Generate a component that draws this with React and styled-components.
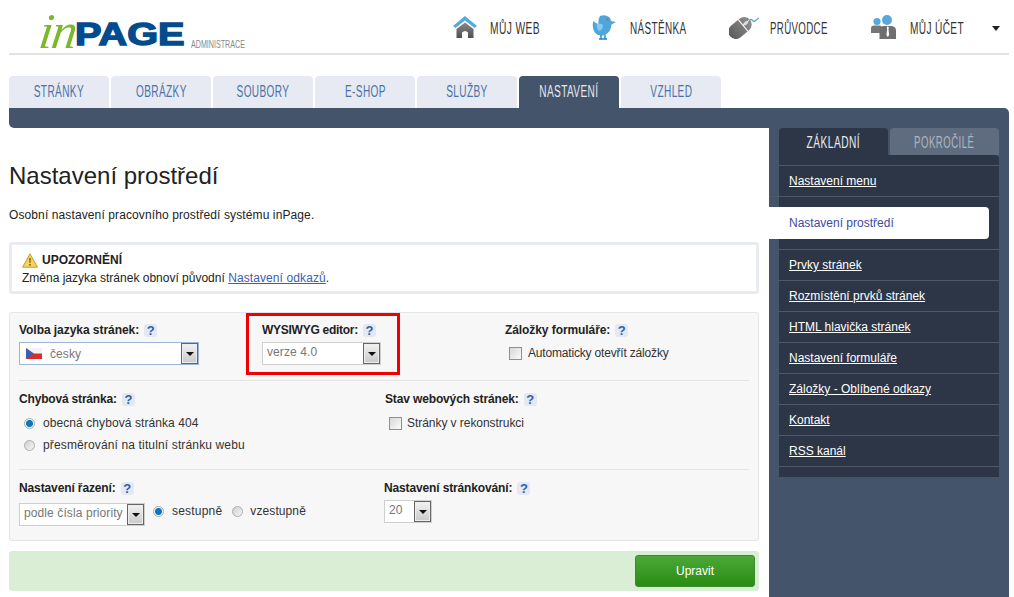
import styled, { createGlobalStyle } from 'styled-components'

const Global = createGlobalStyle`
  html, body { margin: 0; padding: 0; background: #fff; }
  body {
    font-family: "Liberation Sans", Arial, sans-serif;
    font-size: 12px;
    color: #222;
    overflow: hidden;
  }
  * { box-sizing: border-box; }
`

// no condensed family is installed, so the caps are squeezed horizontally
const Squeezed = styled.span`
  display: inline-block;
  white-space: nowrap;
  transform: scaleX(${p => p.$x || 0.63});
  transform-origin: ${p => p.$origin || 'center'};
`

function HomeIcon() {
  return (
    <svg width="24" height="22" viewBox="0 0 24 22">
      <defs>
        <linearGradient id="homeBody" x1="0" y1="0" x2="0" y2="1">
          <stop offset="0" stopColor="#8a8a8a" />
          <stop offset="1" stopColor="#4f4f4f" />
        </linearGradient>
      </defs>
      <path d="M12 0 L24 10 L21.5 12 L12 4.5 L2.5 12 L0 10 Z" fill="#56a9df" />
      <path
        fillRule="evenodd"
        d="M12 6.5 L20.5 13 V22 H15 V16.5 Q12 13.5 9 16.5 V22 H3.5 V13 Z"
        fill="url(#homeBody)"
      />
    </svg>
  )
}

function BirdIcon() {
  return (
    <svg width="25" height="25" viewBox="0 0 25 25">
      <path
        d="M8 1 Q13 -1 17 2 Q19 4 19 6 L24 7 L19.5 9.5 Q19 17 13 20 Q6 22 2.5 17 Q-0.5 11 1.5 6 Q4 9 6.5 9 Q6 4 8 1 Z"
        fill="#4ea6dc"
      />
      <path d="M5 9 Q9 8 11 10 Q11 15 7 16 Q4 13 5 9 Z" fill="#8cc8ee" />
      <circle cx="15.5" cy="4.5" r="1.4" fill="#7b8794" />
      <path d="M9 20 V24 M13 20 V24 M7 24 H15" stroke="#1f86c6" strokeWidth="1.4" fill="none" />
    </svg>
  )
}

function MouseIcon() {
  return (
    <svg width="30" height="24" viewBox="0 0 30 24" style={{ marginRight: -2 }}>
      <defs>
        <linearGradient id="mouseBody" x1="0" y1="0" x2="0" y2="1">
          <stop offset="0" stopColor="#8f8f8f" />
          <stop offset="1" stopColor="#5c5c5c" />
        </linearGradient>
      </defs>
      <g transform="rotate(50 11 13)">
        <rect x="3.5" y="0" width="15" height="26" rx="7.5" fill="url(#mouseBody)" />
        <path d="M3.5 9 H18.5 M11 0 V9" stroke="#fff" strokeWidth="1" />
        <rect x="9.5" y="3" width="3" height="5" rx="1.5" fill="#ddd" />
      </g>
      <path d="M20 7 Q21 3 23 5 T26 6 T30 3" stroke="#4ea6dc" strokeWidth="1.2" fill="none" />
    </svg>
  )
}

function UsersIcon() {
  return (
    <svg width="26" height="24" viewBox="0 0 26 24">
      <circle cx="6" cy="6.5" r="3.6" fill="#56a9df" />
      <path d="M0 18 V13.5 Q0 10.5 3 10.5 H9 Q11 10.5 11 13 V18 Z" fill="#777" />
      <circle cx="16" cy="5" r="5" fill="#56a9df" />
      <path d="M8.5 24 V15.5 Q8.5 11 13 11 H19.5 Q25 11 25 15.5 V24 Z" fill="#6f6f6f" />
      <path d="M16.8 11 L15.6 13 L16.2 14 L15.4 20 L16.8 22 L18.2 20 L17.4 14 L18 13 Z" fill="#fff" />
    </svg>
  )
}

function Flag() {
  return (
    <svg width="16" height="11" viewBox="0 0 16 11">
      <rect width="16" height="5.5" fill="#f3f3f3" />
      <rect y="5.5" width="16" height="5.5" fill="#dc2b2b" />
      <path d="M0 0 L8 5.5 L0 11 Z" fill="#3a5fae" />
    </svg>
  )
}

function WarningIcon() {
  return (
    <svg width="16" height="15" viewBox="0 0 16 15">
      <path d="M8 .8 L15.4 14.2 H.6 Z" fill="#f8d25c" stroke="#c99a2e" strokeLinejoin="round" />
      <path d="M7.2 5 H8.8 L8.5 10 H7.5 Z M7.2 11 H8.8 V12.6 H7.2 Z" fill="#7a5a14" />
    </svg>
  )
}

const Page = styled.div`
  width: 1014px;
  height: 597px;
  padding: 0 5px 0 9px;
  overflow: hidden;
`
const Header = styled.header`
  height: 55px;
  display: flex;
  border-bottom: 2px solid #e2e2e2;
`
const Logo = styled.div`
  width: 444px;
  padding: 13px 0 0 31px;
  display: flex;
  align-items: flex-start;
  flex-shrink: 0;
`
const LogoIn = styled.span`
  width: 35px;
  font-family: "Liberation Serif", serif;
  font-style: italic;
  font-size: 50px;
  line-height: 36px;
  letter-spacing: -1.5px;
  color: #7ab829;
  transform: skewX(-8deg);
`
const LogoPage = styled.span`
  width: 110px;
  margin-top: 10px;
  font-weight: 700;
  font-size: 31px;
  line-height: 23px;
  color: #034b8f;
  -webkit-text-stroke: 1.4px #034b8f;
  transform: scaleX(1.28);
  transform-origin: left center;
`
const LogoNote = styled.span`
  margin: 25px 0 0 6px;
  font-size: 10.5px;
  line-height: 12px;
  color: #888;
`
const Nav = styled.nav`
  display: flex;
  align-items: center;
  padding-top: 1px;
`
const NavItem = styled.a`
  width: ${p => p.$width}px;
  display: flex;
  align-items: center;
  gap: 13px;
  font-size: 16px;
  letter-spacing: 0.6px;
  color: #333;
  svg { flex-shrink: 0; }
  span { margin-top: 3px; }
`
const Caret = styled.span`
  width: 0;
  height: 0;
  margin: 2px 0 0 28px;
  border: 4px solid transparent;
  border-top: 5px solid #222;
  border-bottom: 0;
`
const Tabs = styled.div`
  display: flex;
  gap: 2px;
  margin-top: 21px;
`
const Tab = styled.a`
  width: 100px;
  height: 32px;
  padding-bottom: 1px;
  display: flex;
  align-items: center;
  justify-content: center;
  border-radius: 4px 4px 0 0;
  font-size: 16px;
  letter-spacing: 0.6px;
  background: ${p => (p.$active ? '#44546a' : '#e7eaf2')};
  color: ${p => (p.$active ? '#e6e9ef' : '#4a72aa')};
`
const Bar = styled.div`
  height: 20px;
  background: #44546a;
  border-radius: 0 5px 0 5px;
`
const Body = styled.div`
  display: flex;
  height: 470px;
`
const Main = styled.main`
  width: 760px;
  padding: 34px 10px 0 0;
  background: #fff;
  border-radius: 0 4px 0 0;
`
const Title = styled.h1`
  margin: 0;
  font-weight: 400;
  font-size: 24px;
  line-height: 28px;
  color: #222;
`
const Lead = styled.p`
  margin: 17px 0 19px;
  line-height: 16px;
  letter-spacing: 0.11px;
`
const Notice = styled.div`
  height: 52px;
  padding: 6px 0 0 10px;
  border: 3px solid #e8ebf2;
  border-radius: 3px;
  line-height: 18px;
`
const NoticeHead = styled.div`
  display: flex;
  align-items: center;
  gap: 4px;
  font-weight: 700;
`
const Link = styled.a`
  color: #3b5fb0;
  text-decoration: underline;
  letter-spacing: 0.1px;
`
const Panel = styled.section`
  margin-top: 18px;
  height: 229px;
  background: #f7f7f7;
  border: 1px solid #e5e5e5;
  border-radius: 3px;
`
const Row = styled.div`
  display: grid;
  grid-template-columns: ${p => p.$cols};
  margin: 0 9px;
  padding: ${p => p.$pad};
  border-bottom: ${p => (p.$last ? '0' : '1px solid #e4e4e4')};
`
const Field = styled.div`
  padding-top: ${p => p.$top || 0}px;
`
const MarkedField = styled.div`
  width: 154px;
  height: 62px;
  padding: 6px 0 0 13px;
  border: 3px solid #f00000;
`
const Label = styled.div`
  display: flex;
  align-items: center;
  gap: 5px;
  height: 16px;
  font-weight: 700;
  color: #222;
  letter-spacing: ${p => p.$spacing || 0}px;
`
const Help = styled.span`
  width: 13px;
  height: 13px;
  display: flex;
  align-items: center;
  justify-content: center;
  border-radius: 3px;
  background: #e3e9f3;
  color: #2f5fa8;
  font-size: 13px;
  font-weight: 700;
`
const SelectBox = styled.div`
  position: relative;
  width: ${p => p.$width}px;
  height: 23px;
  margin-top: ${p => p.$mt ?? 4}px;
  display: flex;
  align-items: center;
  gap: 8px;
  padding: ${p => p.$pad || '0 0 4px 4px'};
  background: #fff;
  border: 1px solid ${p => (p.$focus ? '#9db6d4' : '#cfcfcf')};
  color: #777;
  letter-spacing: 0.1px;
`
const SelectArrow = styled.span`
  position: absolute;
  top: 0;
  right: 0;
  width: 17px;
  height: 21px;
  display: flex;
  align-items: center;
  justify-content: center;
  border: 1px solid #666;
  box-shadow: inset 0 0 0 1px #ededed;
  background: linear-gradient(#f2f2f2, #c9c9c9);
  &::after {
    content: '';
    border: 4px solid transparent;
    border-top: 4px solid #111;
    border-bottom: 0;
  }
`
const Choice = styled.label`
  display: flex;
  align-items: center;
  height: ${p => p.$height || 22}px;
  margin-top: ${p => p.$mt || 0}px;
  gap: ${p => p.$gap || 8}px;
  padding-left: ${p => p.$indent || 5}px;
  color: #333;
  letter-spacing: ${p => p.$spacing || 0}px;
`
const Radio = styled.span`
  width: 11px;
  height: 11px;
  flex-shrink: 0;
  border-radius: 50%;
  border: 1px solid #adadad;
  background: ${p =>
    p.$on
      ? 'radial-gradient(circle, #0a78b8 0 3px, #eef2f5 4px)'
      : 'linear-gradient(135deg, #cfcfcf, #f6f6f6)'};
`
const Check = styled.span`
  width: 13px;
  height: 13px;
  flex-shrink: 0;
  border: 1px solid #8f8f8f;
  background: linear-gradient(135deg, #d8d8d8, #fbfbfb);
`
const SortLine = styled.div`
  display: flex;
  align-items: flex-start;
`
const SortChoices = styled.div`
  display: flex;
  margin: 0 0 0 3px;
`
const Actions = styled.div`
  height: 40px;
  margin-top: 10px;
  padding: 4px;
  display: flex;
  justify-content: flex-end;
  background: #d9eed5;
  border-radius: 3px;
`
const Submit = styled.button`
  width: 120px;
  height: 32px;
  border: 1px solid #3c8a2b;
  border-radius: 3px;
  background: linear-gradient(#4ca838, #2a8c12);
  color: #fff;
  font: 12px "Liberation Sans", Arial, sans-serif;
`
const Side = styled.aside`
  width: 240px;
  padding: 0 10px;
  background: #44546a;
`
const SideTabs = styled.div`
  display: flex;
  gap: 2px;
`
const SideTab = styled.a`
  width: 109px;
  height: 27px;
  padding-top: 3px;
  display: flex;
  align-items: center;
  justify-content: center;
  border-radius: 4px 4px 0 0;
  font-size: 16px;
  letter-spacing: 0.8px;
  background: ${p => (p.$active ? '#2c3646' : '#5f6c7f')};
  color: ${p => (p.$active ? '#e8ebf0' : '#aeb5c0')};
`
const Menu = styled.ul`
  list-style: none;
  margin: 0;
  padding: 10px 0;
  background: #2c3646;
  border-radius: 0 4px 0 0;
`
const MenuItem = styled.li`
  height: ${p => (p.$active ? 53 : 31)}px;
  padding: ${p => (p.$active ? '10px 10px 10px 0' : '0 0 0 10px')};
  margin-left: ${p => (p.$active ? -10 : 0)}px;
  display: flex;
  align-items: center;
  border-top: 1px solid #4e5866;
  &:last-child {
    height: 32px;
    border-bottom: 1px solid #4e5866;
  }
`
const MenuLink = styled.a`
  color: #fff;
  text-decoration: underline;
`
const ActiveLink = styled.a`
  width: 100%;
  height: 32px;
  display: flex;
  align-items: center;
  padding-left: 20px;
  background: #fff;
  border-radius: 0 4px 4px 0;
  color: #3b4ba0;
`

const tabs = ['STRÁNKY', 'OBRÁZKY', 'SOUBORY', 'E-SHOP', 'SLUŽBY', 'NASTAVENÍ', 'VZHLED']
const menu = [
  'Nastavení menu',
  'Nastavení prostředí',
  'Prvky stránek',
  'Rozmístění prvků stránek',
  'HTML hlavička stránek',
  'Nastavení formuláře',
  'Záložky - Oblíbené odkazy',
  'Kontakt',
  'RSS kanál'
]

function FieldLabel({ children, spacing }) {
  return (
    <Label $spacing={spacing}>
      {children}
      <Help>?</Help>
    </Label>
  )
}

export default function App() {
  return (
    <Page>
      <Global />
      <Header>
        <Logo>
          <LogoIn>in</LogoIn>
          <LogoPage>PAGE</LogoPage>
          <LogoNote>
            <Squeezed $x={0.68} $origin="left">ADMINISTRACE</Squeezed>
          </LogoNote>
        </Logo>
        <Nav>
          <NavItem $width={139}>
            <HomeIcon />
            <Squeezed $origin="left" $x={0.64}>MŮJ WEB</Squeezed>
          </NavItem>
          <NavItem $width={137}>
            <BirdIcon />
            <Squeezed $origin="left" $x={0.62}>NÁSTĚNKA</Squeezed>
          </NavItem>
          <NavItem $width={142}>
            <MouseIcon />
            <Squeezed $origin="left" $x={0.605}>PRŮVODCE</Squeezed>
          </NavItem>
          <NavItem $width={93}>
            <UsersIcon />
            <Squeezed $origin="left">MŮJ ÚČET</Squeezed>
          </NavItem>
          <Caret />
        </Nav>
      </Header>

      <Tabs>
        {tabs.map(t => (
          <Tab key={t} $active={t === 'NASTAVENÍ'}>
            <Squeezed>{t}</Squeezed>
          </Tab>
        ))}
      </Tabs>
      <Bar />

      <Body>
        <Main>
          <Title>Nastavení prostředí</Title>
          <Lead>Osobní nastavení pracovního prostředí systému inPage.</Lead>
          <Notice>
            <NoticeHead>
              <WarningIcon />
              UPOZORNĚNÍ
            </NoticeHead>
            Změna jazyka stránek obnoví původní <Link>Nastavení odkazů</Link>.
          </Notice>

          <Panel>
            <Row $cols="227px 259px 1fr" $pad="0 0 5px">
              <Field $top={9}>
                <FieldLabel spacing={-0.05}>Volba jazyka stránek:</FieldLabel>
                <SelectBox $width={180} $focus $pad="0 0 0 6px">
                  <Flag />
                  česky
                  <SelectArrow />
                </SelectBox>
              </Field>
              <MarkedField>
                <FieldLabel spacing={-0.27}>WYSIWYG editor:</FieldLabel>
                <SelectBox $width={119}>
                  verze 4.0
                  <SelectArrow />
                </SelectBox>
              </MarkedField>
              <Field $top={9}>
                <FieldLabel spacing={-0.08}>Záložky formuláře:</FieldLabel>
                <Choice $indent={4} $gap={6} $height={30} $spacing={-0.18}>
                  <Check />
                  Automaticky otevřít záložky
                </Choice>
              </Field>
            </Row>

            <Row $cols="366px 1fr" $pad="10px 0 13px">
              <Field>
                <FieldLabel spacing={-0.18}>Chybová stránka:</FieldLabel>
                <Choice $mt={5} $spacing={0.08}>
                  <Radio $on />
                  obecná chybová stránka 404
                </Choice>
                <Choice $spacing={0.14}>
                  <Radio />
                  přesměrování na titulní stránku webu
                </Choice>
              </Field>
              <Field>
                <FieldLabel spacing={-0.14}>Stav webových stránek:</FieldLabel>
                <Choice $indent={4} $gap={5} $mt={5} $spacing={-0.05}>
                  <Check />
                  Stránky v rekonstrukci
                </Choice>
              </Field>
            </Row>

            <Row $cols="365px 1fr" $pad="10px 0 0" $last>
              <Field>
                <FieldLabel spacing={-0.12}>Nastavení řazení:</FieldLabel>
                <SortLine>
                  <SelectBox $width={126} $mt={7}>
                    podle čísla priority
                    <SelectArrow />
                  </SelectBox>
                  <SortChoices>
                    <Choice $indent={5} $gap={8} $spacing={0.2} $mt={4}>
                      <Radio $on />
                      sestupně
                    </Choice>
                    <Choice $indent={10} $gap={7} $spacing={0.1} $mt={4}>
                      <Radio />
                      vzestupně
                    </Choice>
                  </SortChoices>
                </SortLine>
              </Field>
              <Field>
                <FieldLabel spacing={-0.14}>Nastavení stránkování:</FieldLabel>
                <SelectBox $width={48}>
                  20
                  <SelectArrow />
                </SelectBox>
              </Field>
            </Row>
          </Panel>

          <Actions>
            <Submit>Upravit</Submit>
          </Actions>
        </Main>

        <Side>
          <SideTabs>
            <SideTab $active><Squeezed $x={0.635}>ZÁKLADNÍ</Squeezed></SideTab>
            <SideTab><Squeezed $x={0.6}>POKROČILÉ</Squeezed></SideTab>
          </SideTabs>
          <Menu>
            {menu.map(m =>
              m === 'Nastavení prostředí' ? (
                <MenuItem key={m} $active>
                  <ActiveLink>{m}</ActiveLink>
                </MenuItem>
              ) : (
                <MenuItem key={m}>
                  <MenuLink>{m}</MenuLink>
                </MenuItem>
              )
            )}
          </Menu>
        </Side>
      </Body>
    </Page>
  )
}
